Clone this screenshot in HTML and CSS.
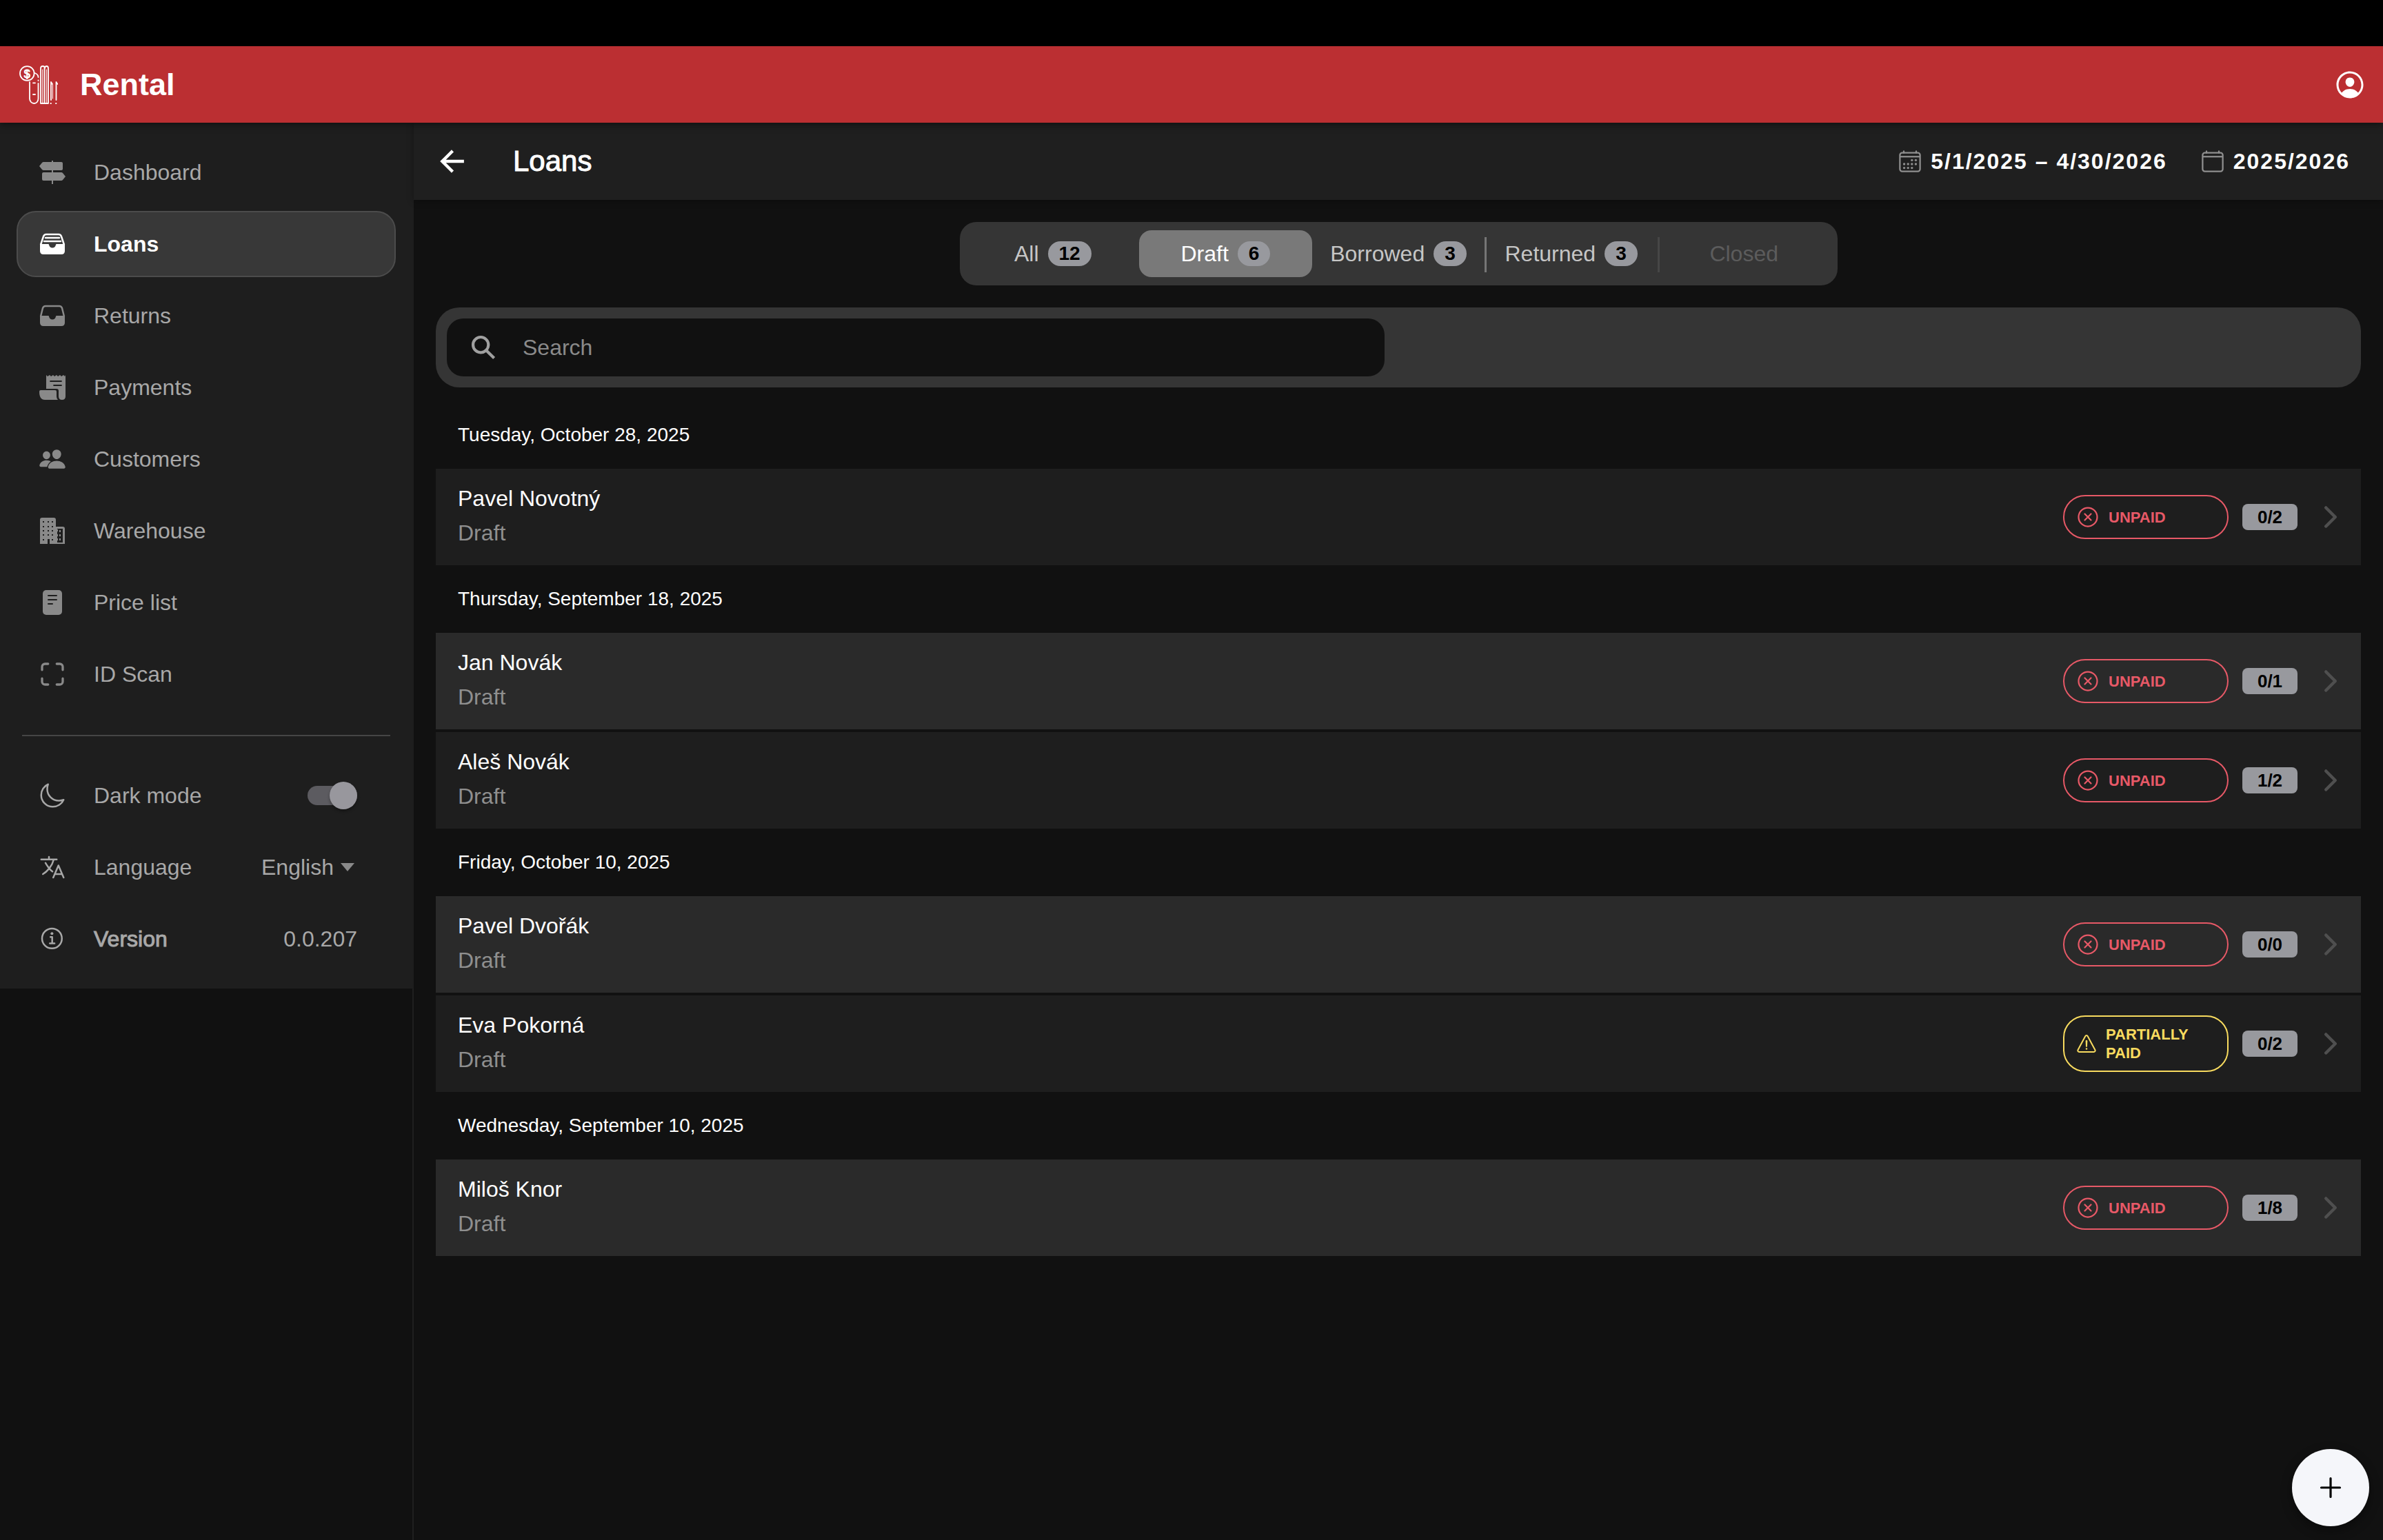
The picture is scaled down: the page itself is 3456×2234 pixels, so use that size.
FILE: index.html
```
<!DOCTYPE html>
<html lang="en">
<head>
<meta charset="utf-8">
<meta name="viewport" content="width=device-width, initial-scale=1">
<title>Rental – Loans</title>
<link rel="stylesheet" href="styles.css">
</head>
<body>
<svg class="sprite" width="0" height="0" aria-hidden="true">
  <symbol id="i-unpaid" viewBox="0 0 512 512"><g fill="none" stroke="currentColor" stroke-width="32" stroke-linecap="round"><path d="M448 256c0-106-86-192-192-192S64 150 64 256s86 192 192 192 192-86 192-192z"/><path d="M320 320L192 192M192 320l128-128"/></g></symbol>
  <symbol id="i-warning" viewBox="0 0 512 512"><g fill="none" stroke="currentColor" stroke-width="32" stroke-linecap="round" stroke-linejoin="round"><path d="M85.570 446.250h340.860a32 32 0 0028.170-47.170L284.180 82.580c-12.090-22.440-44.270-22.440-56.360 0L57.400 399.080a32 32 0 0028.170 47.170z"/><path d="M250.260 195.390l5.740 122 5.730-121.950a5.740 5.740 0 00-5.790-6h0a5.740 5.740 0 00-5.680 5.950z"/></g><circle cx="256" cy="377" r="20" fill="currentColor"/></symbol>
  <symbol id="i-chevron" viewBox="0 0 512 512"><path d="M184 112l144 144-144 144" fill="none" stroke="currentColor" stroke-width="48" stroke-linecap="round" stroke-linejoin="round"/></symbol>
  <symbol id="i-calendar" viewBox="0 0 512 512"><g fill="none" stroke="currentColor" stroke-width="32" stroke-linejoin="round"><rect x="48" y="80" width="416" height="384" rx="48"/><path d="M128 48v32M384 48v32" stroke-linecap="round"/><path d="M464 160H48"/></g></symbol>
</svg>

<div class="status-bar"></div>
<header class="app-bar">
  <svg class="logo" viewBox="0 0 56 56" fill="none" stroke="currentColor" stroke-width="1.800" stroke-linecap="round" stroke-linejoin="round" aria-hidden="true">
    <circle cx="11.300" cy="11.500" r="10.300"/>
    <text x="11.300" y="17.500" text-anchor="middle" class="logo-sign">$</text>
    <path d="M22.500 11c3 1 5 3 5 6M15 24v24c0 4 3 7 6.500 7s6-3 6-7V26M27.500 21.500v.5M20 25.300h3M20 42h3"/>
    <path d="M31 55V4q0-3 3-3t3 3q0-3 2.500-3T42 4v51zM36.500 4v51" />
    <path d="M33.700 6v49M39.300 6v49" stroke-width="1"/>
    <path d="M46 50V24l2 3M53.500 50V24l2 3M45.500 55h.5M53 55h.5"/>
    <path d="M48.500 28v20" stroke-width="1"/>
  </svg>
  <span class="brand">Rental</span>
  <button class="icon-button profile" type="button" aria-label="Account">
    <svg class="icon-48" viewBox="0 0 512 512" fill="currentColor" aria-hidden="true"><path d="M258.900 48C141.920 46.420 46.420 141.920 48 258.900c1.560 112.190 92.910 203.540 205.100 205.100 117 1.600 212.480-93.900 210.880-210.880C462.440 140.910 371.090 49.560 258.900 48zM385.320 375.250a4 4 0 01-6.140-.32 124.270 124.270 0 00-32.350-29.590C321.370 329 289.110 320 256 320s-65.370 9-90.830 25.340a124.240 124.240 0 00-32.350 29.580 4 4 0 01-6.140.32A175.320 175.320 0 0180 259c-1.630-97.310 78.220-178.760 175.570-179S432 158.810 432 256a175.320 175.320 0 01-46.680 119.250z"/><path d="M256 144c-19.720 0-37.550 7.390-50.220 20.820s-19 32-17.570 51.930C191.110 256 221.520 288 256 288s64.830-32 67.790-71.240c1.480-19.740-4.800-38.140-17.680-51.820C293.390 151.440 275.590 144 256 144z"/></svg>
  </button>
</header>

<div class="layout">
  <aside class="sidebar">
    <div class="menu">
      <nav class="menu-group" aria-label="Main">
        <a class="menu-item" href="#dashboard">
          <svg class="menu-icon" viewBox="0 0 48 48" fill="currentColor" aria-hidden="true"><path d="M23 7h2v34h-2z"/><path d="M11 9h26q2 0 2 2v8q0 2-2 2H11q-1 0-2-1l-4-5 4-5q1-1 2-1zM11 24h26q1 0 2 1l4 5-4 5q-1 1-2 1H11q-2 0-2-2v-8q0-2 2-2z"/></svg>
          Dashboard</a>
        <a class="menu-item active" href="#loans" aria-current="page">
          <svg class="menu-icon" viewBox="0 0 48 48" aria-hidden="true"><path d="M7 25L11 13q1-3 4-3h18q3 0 4 3l4 12" fill="none" stroke="currentColor" stroke-width="2.500"/><path d="M14 15h20M12 20h24" stroke="currentColor" stroke-width="2.500" stroke-linecap="round"/><path d="M6 24h12q1 0 1 1c1 6 9 6 10 0q0-1 1-1h12v10q0 5-5 5H11q-5 0-5-5z" fill="currentColor"/></svg>
          Loans</a>
        <a class="menu-item" href="#returns">
          <svg class="menu-icon" viewBox="0 0 48 48" aria-hidden="true"><path d="M7 25L10 13q1-3 4-3h20q3 0 4 3l3 12" fill="none" stroke="currentColor" stroke-width="2.500"/><path d="M6 24h12q1 0 1 1c1 6 9 6 10 0q0-1 1-1h12v10q0 5-5 5H11q-5 0-5-5z" fill="currentColor"/></svg>
          Returns</a>
        <a class="menu-item" href="#payments">
          <svg class="menu-icon" viewBox="0 0 48 48" fill="currentColor" aria-hidden="true"><path fill-rule="evenodd" d="M15 6l2 2 3-2 2 2 3-2 2 2 3-2 2 2 3-2 2 2 3-2 2 2 1-2v31q0 5-5 5t-5-5v-8q0-3-3-3H15zM21 14q-2 1 0 2h16q2-1 0-2zM26 20q-2 1 0 2h11q2-1 0-2z"/><path d="M7 28h21q2 0 2 2v7q0 3 2 5H13q-8 0-8-12 0-2 2-2z"/></svg>
          Payments</a>
        <a class="menu-item" href="#customers">
          <svg class="menu-icon inset" viewBox="0 0 512 512" fill="currentColor" aria-hidden="true"><path d="M336 256c-20.560 0-40.440-9.180-56-25.840-15.130-16.250-24.370-37.920-26-61-1.740-24.620 5.770-47.260 21.140-63.760S312 80 336 80c23.830 0 45.380 9.060 60.700 25.520 15.470 16.620 23 39.220 21.260 63.630-1.670 23.110-10.900 44.770-26 61C376.440 246.820 356.570 256 336 256zM467.830 432H204.180a27.710 27.710 0 01-22-10.670 30.220 30.220 0 01-5.260-25.790c8.420-33.810 29.280-61.850 60.320-81.080C264.790 297.400 299.860 288 336 288c36.850 0 71 9 98.710 26.050 31.110 19.130 52 47.330 60.380 81.550a30.270 30.270 0 01-5.320 25.780A27.680 27.680 0 01467.830 432zM147 260c-35.190 0-66.130-32.720-69-72.930-1.420-20.600 5-39.650 18-53.620 12.860-13.830 31-21.450 51-21.450s38 7.660 50.930 21.570c13.100 14.080 19.500 33.090 18 53.520-2.870 40.200-33.800 72.910-68.930 72.910zM212.660 291.450c-17.590-8.600-40.420-12.900-65.650-12.900-29.460 0-58.070 7.680-80.570 21.620-25.510 15.830-42.670 38.880-49.600 66.710a27.390 27.390 0 004.790 23.360A25.320 25.320 0 0041.720 400h111a8 8 0 007.870-6.570c.11-.63.25-1.260.41-1.880 8.480-34.060 28.350-62.840 57.710-83.820a8 8 0 00-.63-13.390c-1.570-.92-3.370-1.890-5.420-2.890z"/></svg>
          Customers</a>
        <a class="menu-item" href="#warehouse">
          <svg class="menu-icon" viewBox="0 0 48 48" aria-hidden="true"><path fill="currentColor" d="M9 5h17q3 0 3 3v10h10q3 0 3 3v22H20v-7h-3v7H6V8q0-3 3-3z"/><path class="cutout" d="M31 21h8v20h-8zM10 10h2v2h-2zM17 10h2v2h-2zM23 10h2v2h-2zM10 17h2v2h-2zM17 17h2v2h-2zM23 17h2v2h-2zM10 23h2v2h-2zM17 23h2v2h-2zM23 23h2v2h-2zM10 29h2v2h-2zM17 29h2v2h-2zM23 29h2v2h-2zM10 36h2v2h-2zM23 36h2v2h-2z"/><path fill="currentColor" d="M30 22h2v3h-2zM34 23h2v3h-2zM30 29h2v3h-2zM34 29h2v3h-2zM30 35h2v3h-2zM34 35h2v3h-2z"/></svg>
          Warehouse</a>
        <a class="menu-item" href="#pricelist">
          <svg class="menu-icon" viewBox="0 0 48 48" aria-hidden="true"><rect x="10" y="6" width="28" height="36" rx="5" fill="currentColor"/><path class="cutline" d="M18 14h12M18 20h12M18 26h6"/></svg>
          Price list</a>
        <a class="menu-item" href="#scan">
          <svg class="menu-icon inset" viewBox="0 0 512 512" fill="none" stroke="currentColor" stroke-width="42" stroke-linecap="round" aria-hidden="true"><path d="M336 448h56a56 56 0 0056-56v-56M448 176v-56a56 56 0 00-56-56h-56M176 448h-56a56 56 0 01-56-56v-56M64 176v-56a56 56 0 0156-56h56"/></svg>
          ID Scan</a>
      </nav>
      <hr class="menu-divider">
      <div class="menu-group">
        <div class="menu-item setting">
          <svg class="menu-icon inset light" viewBox="0 0 512 512" fill="none" stroke="currentColor" stroke-width="32" stroke-linejoin="round" aria-hidden="true"><path d="M160 136c0-30.620 4.510-61.610 16-88C99.570 81.270 48 159.320 48 248c0 119.290 96.710 216 216 216 88.680 0 166.730-51.570 200-128-26.390 11.490-57.380 16-88 16-119.290 0-216-96.710-216-216z"/></svg>
          <label class="setting-label" for="dark">Dark mode</label>
          <input class="toggle" id="dark" type="checkbox" role="switch" checked>
        </div>
        <div class="menu-item setting">
          <svg class="menu-icon inset light" viewBox="0 0 512 512" fill="none" stroke="currentColor" stroke-width="32" stroke-linecap="round" stroke-linejoin="round" aria-hidden="true"><path d="M48 112h288M192 64v48M272 448l96-224 96 224M301.500 384h133M281.300 112S257 206 199 277 80 384 80 384M256 336s-35-27-72-75-56-85-56-85"/></svg>
          <label class="setting-label" for="lang">Language</label>
          <select class="language" id="lang"><option>English</option></select>
          <svg class="caret" viewBox="0 0 24 12" aria-hidden="true"><path d="M0 0h20L10 12z" fill="currentColor"/></svg>
        </div>
        <div class="menu-item setting">
          <svg class="menu-icon inset light" viewBox="0 0 512 512" fill="none" stroke="currentColor" stroke-width="32" stroke-linecap="round" aria-hidden="true"><circle cx="248" cy="248" r="184"/><path d="M220 220h32v116M208 340h88" stroke-linejoin="round"/><circle cx="248" cy="156" r="26" fill="currentColor" stroke="none"/></svg>
          <span class="setting-label medium">Version</span>
          <span>0.0.207</span>
        </div>
      </div>
    </div>
  </aside>

  <main class="page">
    <div class="toolbar">
      <button class="icon-button back" type="button" aria-label="Back">
        <svg class="icon-48" viewBox="0 0 512 512" fill="none" stroke="currentColor" stroke-width="48" stroke-linecap="square" aria-hidden="true"><path d="M244 400L100 256l144-144M120 256h292"/></svg>
      </button>
      <h1 class="page-title medium">Loans</h1>
      <button class="date-button" type="button">
        <svg class="icon-36" viewBox="0 0 512 512" aria-hidden="true"><use href="#i-calendar"/><g fill="currentColor"><circle cx="296" cy="232" r="24"/><circle cx="376" cy="232" r="24"/><circle cx="296" cy="312" r="24"/><circle cx="376" cy="312" r="24"/><circle cx="136" cy="312" r="24"/><circle cx="216" cy="312" r="24"/><circle cx="136" cy="392" r="24"/><circle cx="216" cy="392" r="24"/><circle cx="296" cy="392" r="24"/></g></svg>
        5/1/2025 – 4/30/2026</button>
      <button class="date-button" type="button">
        <svg class="icon-36" aria-hidden="true"><use href="#i-calendar"/></svg>
        2025/2026</button>
    </div>

    <div class="content">
      <div class="segment" role="tablist" aria-label="Loan state">
        <button class="tab" type="button" role="tab">All <span class="count">12</span></button>
        <button class="tab selected" type="button" role="tab" aria-selected="true">Draft <span class="count">6</span></button>
        <button class="tab" type="button" role="tab">Borrowed <span class="count">3</span></button>
        <button class="tab split" type="button" role="tab">Returned <span class="count">3</span></button>
        <button class="tab split" type="button" role="tab" disabled>Closed</button>
      </div>

      <div class="filters">
        <label class="search">
          <svg class="icon-42" viewBox="0 0 512 512" fill="currentColor" aria-hidden="true"><path d="M464 428L339.920 303.900a160.480 160.480 0 0030.720-94.580C370.640 120.370 298.270 48 209.320 48S48 120.370 48 209.320s72.370 161.320 161.320 161.320a160.480 160.480 0 0094.580-30.720L428 464zM209.320 319.690a110.380 110.380 0 11110.370-110.370 110.500 110.500 0 01-110.370 110.370z"/></svg>
          <input class="search-input" type="search" placeholder="Search" aria-label="Search">
        </label>
      </div>

      <section>
        <h2 class="date">Tuesday, October 28, 2025</h2>
        <ul class="loans">
          <li><a class="loan" href="#loan-1"><span class="who"><span class="name">Pavel Novotný</span><span class="state">Draft</span></span>
            <span class="pill unpaid"><svg class="icon-36" aria-hidden="true"><use href="#i-unpaid"/></svg>UNPAID</span><span class="items">0/2</span><svg class="chevron" aria-hidden="true"><use href="#i-chevron"/></svg></a></li>
        </ul>
      </section>
      <section>
        <h2 class="date">Thursday, September 18, 2025</h2>
        <ul class="loans">
          <li><a class="loan raised" href="#loan-2"><span class="who"><span class="name">Jan Novák</span><span class="state">Draft</span></span>
            <span class="pill unpaid"><svg class="icon-36" aria-hidden="true"><use href="#i-unpaid"/></svg>UNPAID</span><span class="items">0/1</span><svg class="chevron" aria-hidden="true"><use href="#i-chevron"/></svg></a></li>
          <li><a class="loan" href="#loan-3"><span class="who"><span class="name">Aleš Novák</span><span class="state">Draft</span></span>
            <span class="pill unpaid"><svg class="icon-36" aria-hidden="true"><use href="#i-unpaid"/></svg>UNPAID</span><span class="items">1/2</span><svg class="chevron" aria-hidden="true"><use href="#i-chevron"/></svg></a></li>
        </ul>
      </section>
      <section>
        <h2 class="date">Friday, October 10, 2025</h2>
        <ul class="loans">
          <li><a class="loan raised" href="#loan-4"><span class="who"><span class="name">Pavel Dvořák</span><span class="state">Draft</span></span>
            <span class="pill unpaid"><svg class="icon-36" aria-hidden="true"><use href="#i-unpaid"/></svg>UNPAID</span><span class="items">0/0</span><svg class="chevron" aria-hidden="true"><use href="#i-chevron"/></svg></a></li>
          <li><a class="loan" href="#loan-5"><span class="who"><span class="name">Eva Pokorná</span><span class="state">Draft</span></span>
            <span class="pill partial"><svg class="icon-32" aria-hidden="true"><use href="#i-warning"/></svg>PARTIALLY<br>PAID</span><span class="items">0/2</span><svg class="chevron" aria-hidden="true"><use href="#i-chevron"/></svg></a></li>
        </ul>
      </section>
      <section>
        <h2 class="date">Wednesday, September 10, 2025</h2>
        <ul class="loans">
          <li><a class="loan raised" href="#loan-6"><span class="who"><span class="name">Miloš Knor</span><span class="state">Draft</span></span>
            <span class="pill unpaid"><svg class="icon-36" aria-hidden="true"><use href="#i-unpaid"/></svg>UNPAID</span><span class="items">1/8</span><svg class="chevron" aria-hidden="true"><use href="#i-chevron"/></svg></a></li>
        </ul>
      </section>
    </div>
  </main>
</div>

<button class="fab" type="button" aria-label="Add loan">
  <svg class="icon-48" viewBox="0 0 512 512" fill="none" stroke="currentColor" stroke-width="34" stroke-linecap="round" aria-hidden="true"><path d="M256 112v288M400 256H112"/></svg>
</button>
</body>
</html>
```
FILE: styles.css
```
* { box-sizing: border-box; }

body {
  margin: 0;
  min-height: 100vh;
  display: flex;
  flex-direction: column;
  background: #111;
  color: #fff;
  font: 32px/40px "Liberation Sans", Arial, sans-serif;
}

button, input, select { font: inherit; color: inherit; }
button { border: 0; padding: 0; background: none; cursor: pointer; }
a { color: inherit; text-decoration: none; }
svg { display: block; flex: none; }
ul { list-style: none; margin: 0; padding: 0; }
.sprite { position: absolute; }

.icon-32 { width: 32px; height: 32px; }
.icon-36 { width: 36px; height: 36px; }
.icon-42 { width: 42px; height: 42px; }
.icon-48 { width: 48px; height: 48px; }
.medium { -webkit-text-stroke: 1px currentColor; }

/* Header */
.status-bar { height: 67px; background: #000; }
.app-bar {
  height: 111px;
  padding: 0 24px 0 28px;
  display: flex;
  align-items: center;
  background: #bb2f32;
  box-shadow: 0 2px 10px rgba(0, 0, 0, .5);
  position: relative;
  z-index: 1;
}
.logo { width: 56px; height: 56px; }
.logo-sign { font-size: 16px; font-weight: 400; fill: currentColor; stroke: currentColor; stroke-width: 1px; }
.brand { margin-left: 32px; font-size: 45px; font-weight: 700; }
.icon-button { display: flex; }
.profile { margin-left: auto; }

.layout { flex: 1; display: grid; grid-template-columns: 600px minmax(0, 1fr); }

/* Side menu */
.sidebar { border-right: 2px solid #1f1f1f; }
.menu { padding: 24px; background: #1e1e1e; margin-right: -2px; }
.menu-group { display: flex; flex-direction: column; gap: 8px; padding-right: 2px; }
.menu-item {
  height: 96px;
  padding: 0 54px 0 26px;
  display: flex;
  align-items: center;
  border: 2px solid transparent;
  border-radius: 28px;
  color: #a8a8a8;
}
.menu-item.active {
  background: #383838;
  border-color: #4c4c4c;
  color: #fff;
  font-weight: 700;
}
.menu-icon { width: 48px; height: 48px; margin-right: 36px; color: #898989; }
.menu-icon.inset { padding: 4px; }
.menu-icon.light { color: #a8a8a8; }
.active .menu-icon { color: #fff; }
.cutout { fill: #1e1e1e; }
.cutline { stroke: #1e1e1e; stroke-width: 2; stroke-linecap: round; }
.menu-divider { height: 2px; margin: 40px 10px 38px 8px; border: 0; background: #464646; }
.setting-label { flex: 1; }
.toggle {
  appearance: none;
  width: 72px;
  height: 28px;
  margin: 0;
  border-radius: 14px;
  background: #5c5b60;
  display: flex;
  align-items: center;
  justify-content: flex-end;
}
.toggle::before {
  content: "";
  width: 40px;
  height: 40px;
  flex: none;
  border-radius: 50%;
  background: #98979d;
  box-shadow: 0 3px 4px rgba(0, 0, 0, .3);
}
.language { appearance: none; border: 0; padding: 0; background: none; }
.caret { width: 24px; height: 12px; margin-left: 10px; color: #8a8a8a; }

/* Page toolbar */
.toolbar {
  height: 112px;
  padding: 0 48px 0 32px;
  display: flex;
  align-items: center;
  background: #1f1f1f;
  box-shadow: 0 2px 10px rgba(0, 0, 0, .3);
}
.page-title { margin: 0 auto 0 64px; font-size: 42px; font-weight: 400; }
.date-button {
  display: flex;
  align-items: center;
  gap: 12px;
  margin-left: 48px;
  font-weight: 700;
  letter-spacing: 2px;
}
.date-button svg { color: #8f8f8f; }

/* State tabs */
.content { padding: 32px; }
.segment {
  width: 1273px;
  max-width: 100%;
  height: 92px;
  margin: 0 auto 32px;
  padding: 12px 10px;
  display: grid;
  grid-template-columns: repeat(5, 1fr);
  align-items: stretch;
  border-radius: 24px;
  background: #353535;
}
.tab {
  display: flex;
  align-items: center;
  justify-content: center;
  gap: 13px;
  border-radius: 18px;
  color: #c6c6c6;
  position: relative;
}
.tab.selected { background: #797979; color: #fff; }
.tab:disabled { color: #5c5c5c; }
.tab.split::before {
  content: "";
  position: absolute;
  left: 0;
  top: 10px;
  width: 3px;
  height: 51px;
  background: #767676;
}
.tab.split:disabled::before { background: #464646; }
.count {
  padding: 0 16px;
  border-radius: 18px;
  background: #98999e;
  color: #000;
  font-size: 28px;
  line-height: 36px;
  font-weight: 700;
}

/* Search */
.filters { padding: 16px; margin-bottom: 20px; border-radius: 34px; background: #353535; }
.search {
  max-width: 1360px;
  height: 84px;
  padding: 0 32px;
  display: flex;
  align-items: center;
  gap: 36px;
  border-radius: 24px;
  background: #111;
  color: #a0a0a0;
}
.search-input { flex: 1; min-width: 0; border: 0; padding: 0; outline: 0; background: none; }
.search-input::placeholder { color: #8a8a8a; opacity: 1; }

/* Loan list */
.date { margin: 0; padding: 29px 32px; font-size: 28px; font-weight: 400; }
.loans { display: flex; flex-direction: column; gap: 4px; }
.loan {
  height: 140px;
  padding: 0 20px 0 32px;
  display: flex;
  align-items: center;
  background: #1e1e1e;
}
.loan.raised { background: #2a2a2a; }
.who { flex: 1; display: flex; flex-direction: column; line-height: 50px; padding-bottom: 4px; }
.state { color: #8f8f8f; }
.pill {
  width: 240px;
  min-height: 64px;
  padding: 12px 16px;
  display: flex;
  align-items: center;
  gap: 12px;
  border: 2px solid;
  border-radius: 32px;
  font-size: 22px;
  line-height: 27px;
  font-weight: 700;
}
.unpaid { color: #e75967; }
.partial { color: #f8db5f; }
.items {
  width: 80px;
  margin: 0 20px;
  border-radius: 8px;
  background: #98999e;
  color: #000;
  text-align: center;
  font-size: 26px;
  line-height: 38px;
  font-weight: 700;
}
.chevron { width: 48px; height: 48px; margin-left: 4px; color: #4f4f4f; }

.fab {
  position: fixed;
  right: 20px;
  bottom: 20px;
  width: 112px;
  height: 112px;
  display: grid;
  place-items: center;
  border-radius: 50%;
  background: #f5f6fa;
  color: #000;
  box-shadow: 0 6px 16px rgba(0, 0, 0, .4);
}
```
